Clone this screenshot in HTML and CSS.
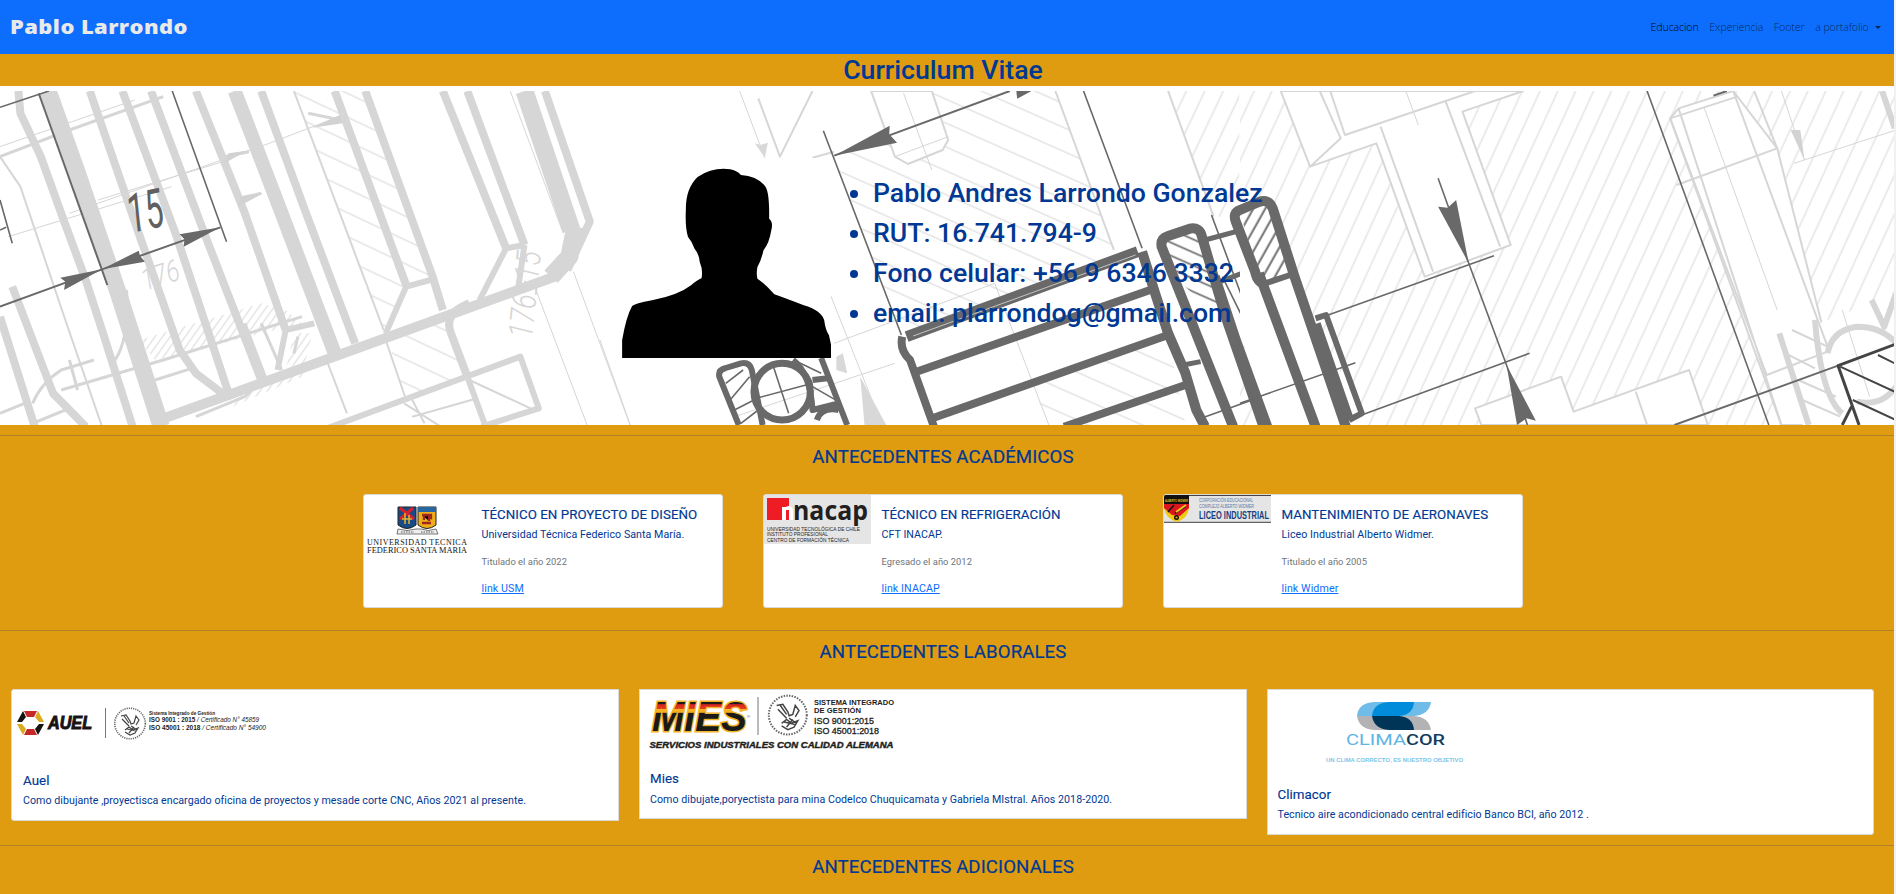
FILE: index.html
```html
<!DOCTYPE html>
<html lang="es">
<head>
<meta charset="utf-8">
<title>Pablo Larrondo</title>
<link rel="stylesheet" href="styles.css">
</head>
<body>
<div class="page">
<nav class="navbar">
  <svg class="brand" width="200" height="30" viewBox="0 0 200 30"><text x="10" y="22" textLength="178" lengthAdjust="spacingAndGlyphs">Pablo Larrondo</text></svg>
  <div class="links">
    <a class="active">Educacion</a><a>Experiencia</a><a>Footer</a><a class="drop">a portafolio<i class="caret"></i></a>
  </div>
</nav>
<h1 class="title">Curriculum Vitae</h1>
<section class="hero">
  <svg class="plan" width="1894" height="334" viewBox="0 0 1894 334">
    <defs>
      <pattern id="steep" width="40" height="40" patternUnits="userSpaceOnUse" patternTransform="rotate(20)"><path d="M3 0V40" stroke="#e6e6e6" stroke-width="4"/></pattern>
      <pattern id="flat" width="40" height="62" patternUnits="userSpaceOnUse" patternTransform="rotate(30)"><path d="M0 3H40" stroke="#e2e2e2" stroke-width="4"/></pattern>
      <pattern id="dense" width="16" height="20" patternUnits="userSpaceOnUse" patternTransform="rotate(30)"><path d="M2 0V20" stroke="#dcdcdc" stroke-width="3"/></pattern>
      <pattern id="dark" width="26" height="20" patternUnits="userSpaceOnUse" patternTransform="rotate(24)"><path d="M4 0V20" stroke="#707070" stroke-width="5"/></pattern>
      <pattern id="darkflat" width="20" height="34" patternUnits="userSpaceOnUse" patternTransform="rotate(30)"><path d="M0 4H20" stroke="#707070" stroke-width="5"/></pattern>
    </defs>
    <!-- Left: housing section -->
    <g transform="matrix(.40816 0 0 .33333 0 -91)" class="g">
      <path d="M720 273L820 273 995 855 945 1000z" fill="url(#flat)" stroke="none"/>
      <path d="M820 273L895 273 1060 835 995 855z" fill="url(#flat)" stroke="none"/>
      <path d="M950 1020L1100 950 1145 1130 995 1200z" fill="url(#flat)" stroke="none"/>
      <path d="M340 1020L640 910 700 930 740 970 380 1080z" fill="url(#dense)" stroke="none"/>
      <path d="M720 1000L765 1000 740 1130 570 1220 600 1170 700 1110z" fill="url(#dense)" stroke="none"/>
      <path d="M0 470L170 390 400 290" class="w3"/><path d="M0 440L330 300M20 710L420 560M170 640L660 430 830 350M240 600L560 480" class="w1"/>
      <path d="M45 273L50 340 100 470 150 640 210 840 250 990 325 1280" class="w8"/>
      <path d="M118 273L190 520 290 880 395 1280" class="w16"/>
      <path d="M220 273L340 700 440 1050 480 1120 545 1180" class="w8"/>
      <path d="M300 273L430 700 560 1180M370 273L510 730 640 1140M480 273L600 640 700 990" class="w8"/>
      <path d="M575 273L690 640 820 1060" class="w14"/>
      <path d="M640 273L750 640 870 1030" class="w8"/>
      <path d="M720 273L940 990M945 1020L995 1200M800 1080L850 1240M0 470L50 560 160 960 250 1280" class="w2"/>
      <path d="M820 273L995 855M895 273L1060 830 1085 930M1085 273L1240 745M1145 273L1285 735" class="w8"/>
      <path d="M1285 273L1400 690" class="w18"/>
      <path d="M1335 273L1445 665 1390 810" class="w8"/><path d="M1410 680L1395 770 1350 830" class="w18"/>
      <path d="M1250 273L1380 700M1310 860L1440 1280M1405 815L1545 1280" class="w1"/>
      <path d="M390 1260L560 1185 1370 825" class="w9"/>
      <path d="M1060 838L995 860 945 1000M1285 735L1240 745 1175 900M1285 735L1270 860M770 970L700 990 680 1110" class="w6"/>
      <path d="M1150 910Q1085 940 1105 1000L1145 1130" class="w8"/>
      <path d="M790 1290L1275 1070 1320 1225 1180 1280M1145 1130L1190 1280" class="w6"/>
      <path d="M1150 1140L1300 1225M990 1210L1080 1280M1010 1250L1170 1195M1010 1200L1040 1270" class="w2"/>
      <path d="M0 950L85 1280M30 860L130 1180 210 1280" class="w8"/>
      <path d="M150 1170L400 1080 740 950M80 1210Q100 1150 150 1110L230 1080M600 970L650 1130M640 970L690 1110M380 1140L470 1105M310 870Q320 1030 270 1100" class="w4"/>
      <path d="M0 1240L60 1210M80 1270L160 1230M170 1080L190 1170M480 1250L600 1190 650 1130M730 1010L720 1060M755 340L835 360M550 470L610 455M585 595L640 580" class="w4"/>
      <path d="M765 383L832 345 840 370zM550 490L605 452 560 460zM583 620L645 580 590 590z" fill="#d2d2d2" stroke="none"/>
      <g class="d"><path d="M95 280L263 855" class="w2"/><path d="M422 273L555 725M0 322L120 273M0 600L30 730M0 690L15 682" class="w15"/><path d="M0 920L250 808 540 682" class="w2"/>
      <path d="M250 808L340 752 343 767 355 785zM250 808L148 833 160 845 157 870zM540 682L440 703 452 718 450 740z" class="f"/></g>
    </g>
    <text transform="translate(131 142) rotate(-12) scale(.62 1)" class="dim" fill="#606060">15</text>
    <text transform="translate(532 248) rotate(-84) scale(.8 1)" class="dimlight">176±15</text>
    <text transform="translate(145 200) rotate(-18) scale(.8 1)" class="dimlight small">176</text>
    <!-- Right: bores and dimensions -->
    <g transform="matrix(.4197 0 0 .33333 1240 -11)" class="g">
      <path d="M0 33H1563V1035H0z" fill="url(#steep)" stroke="none"/>
      <path d="M97 33L167 260 325 190 440 590 645 495 530 95 675 33zM1025 115L1045 85 1175 33 1280 205 1400 800 1425 1035 1290 1035zM560 985L765 890 795 995 1070 870 1115 1035H575z" fill="#fff"/><path d="M1320 760L1563 640V1035H1340z" fill="#fff" stroke="none"/>
      <path d="M190 33L240 175 167 260M215 33L250 165 560 33M335 140L460 575M490 65L620 500M943 935L970 1035M1040 315L1280 205 1225 33M1185 50L1025 115 1255 885 1400 815M1175 33L1400 800M1045 85L1290 1035" class="w2"/>
      <path d="M395 33L425 135M1105 80L1280 690M1290 33L1345 240M1320 250L1563 150M1435 690L1500 950" class="w1"/>
      <path d="M1345 240L1312 150 1335 150z" fill="#d2d2d2" stroke="none"/>
      <path d="M1530 33L1560 145M1285 760L1355 1035M1370 720Q1385 950 1435 1000M1400 820Q1410 750 1470 740 1530 740 1563 790M1505 660L1535 740 1563 640M1470 965Q1530 980 1563 920" class="w6"/>
      <path d="M1315 750L1400 800M1300 820L1370 865M1330 900L1420 950M1340 960L1430 1010" class="w2"/>
    </g>
    <!-- Centre: shaft and bearings -->
    <g transform="matrix(.43367 0 0 .33333 600 -51)" class="g">
      <path d="M540 347L800 240 765 153H1050L1190 640 695 880z" fill="url(#flat)"  stroke="none"/>
      <path d="M1000 1040L1310 890 1350 1155H1030z" fill="url(#flat)" stroke="none"/>
      <path d="M1310 153L1415 530H1474V153z" fill="url(#steep)" stroke="none"/>
      <path d="M625 153L680 350 710 372 790 330 803 300 765 153z" fill="#fff"/>
      <path d="M365 175L415 350 490 153M1050 153L1185 630M1310 153L1415 530M490 353L540 335" class="w2"/>
      <path d="M322 153L380 353M700 160L765 390M680 350L803 290M0 900L70 1155M530 760L650 1155M540 910L910 730 1035 1155M310 1130L680 970" class="w1"/>
      <path d="M357 310L370 315 387 308 380 353zM600 1010L610 1155H660zM545 950L560 940 570 1000 545 990z" fill="#d8d8d8" stroke="none"/>
      <g class="d">
        <path d="M515 272L695 885M1115 153L1250 625M1410 525L1483 780" class="w15"/><path d="M540 347L945 153" class="w2"/>
        <path d="M540 347L668 257 667 283 685 308zM995 153L962 176 960 153z" class="f"/>
        <path d="M1295 600L1370 565 1395 590 1435 815 1400 800 1345 735z" fill="url(#darkflat)" stroke="none"/>
        <path d="M707 890L1240 635" class="w11"/><path d="M722 888L1235 645" stroke="#c4c4c4" class="w1"/>
        <path d="M720 1000L1280 745M755 1140L1310 885M1070 1160L1350 1035M697 890Q690 930 715 960L770 1160" class="w8"/>
        <path d="M1250 635L1280 760 1310 880 1350 1000 1375 1110 1395 1160M1460 1160L1295 620Q1292 595 1310 588L1360 566Q1383 560 1388 590L1440 820 1530 1160" class="w9"/>
        <path d="M1395 600L1475 572M1430 725L1500 690M1345 975L1385 965" class="w5"/>
        <path d="M1435 710L1500 880M1375 1140L1568 1050" class="w15"/>
        <path d="M320 1155L275 1010Q272 990 290 984L325 970Q345 965 350 990L375 1155" class="w6"/>
        <ellipse cx="420" cy="1055" rx="65" ry="85" class="w7"/>
        <path d="M445 960Q485 1000 490 1110L550 1090M510 954L570 1155M490 1020L525 1015M500 1140Q510 1100 550 1110" class="w6"/>
        <path d="M400 980L435 1120M360 1075L490 1030M290 1030L330 990M300 1080L345 1010M310 1110L355 1080M325 1150L365 1110M455 965L510 1000M490 1040L550 1085" class="w15"/>
      </g>
    </g>
    <g transform="matrix(.4197 0 0 .33333 1240 -11)" class="g d">
      <path d="M0 395L65 365 120 590 175 715 290 1000V1035H75L0 760z" fill="#fff" stroke="none"/>
      <path d="M0 395L65 370 120 580 60 610 40 575z" fill="url(#dark)" stroke="none"/>
      <path d="M60 610Q42 610 36 575L-10 425Q-18 398 0 390L45 366Q68 355 78 385L130 590 252 1040M45 580L180 1040M-60 590L-10 780 65 1040" class="w9"/>
      <path d="M60 610L120 585M180 715L205 705 290 1000 260 1020M185 730L265 1020" class="w6"/>
      <path d="M970 33L1260 1035M210 705L605 527M0 970L275 848M290 1005L690 820M472 295L545 550 635 855 685 1035" class="w15"/>
      <path d="M545 550L472 380 495 383 515 360zM635 855L660 1035 683 1015 705 1022z" class="f"/>
      <path d="M1035 1035L1425 857M1128 47L1160 33" class="w2"/>
      <g stroke="#444"><path d="M1563 792L1425 857 1475 1035M1435 1035L1457 980" class="w4"/><path d="M1430 860L1563 937M1520 825L1563 852M1460 960L1563 1020" class="w2"/></g>
    </g>
  </svg>
  <div class="profile">
    <svg class="avatar" width="209" height="200" viewBox="0 0 209 200"><g transform="matrix(.43367 0 0 .33333 -22 -117.7)"><path d="M51 954V900Q60 830 74 797Q80 790 120 780Q180 765 210 735Q225 718 234 714Q238 690 230 665Q228 640 218 625Q213 605 203 590Q196 560 198 510Q197 445 225 410Q260 380 300 387Q315 390 325 404Q365 408 382 440Q391 460 390 535Q400 545 395 570Q390 610 377 630Q372 660 363 680Q360 700 363 715Q380 730 402 762Q430 775 470 795Q510 810 517 840Q520 870 528 885L533 915V954z"/></g></svg>
    <ul class="data"><li>Pablo Andres Larrondo Gonzalez</li><li>RUT: 16.741.794-9</li><li>Fono celular: +56 9 6346 3332</li><li>email: plarrondog@gmail.com</li></ul>
  </div>
</section>
<hr class="r1">
<h3>ANTECEDENTES ACADÉMICOS</h3>
<div class="academic">
  <article class="card">
    <svg class="logo" width="107" height="62" viewBox="0 0 107 62">
      <g transform="translate(33 11)"><path d="M1 1H19V19Q10 26 1 19z" fill="#174a86" stroke="#222"/><path d="M3 2L17 13M16 2L3 13" stroke="#d5222a" stroke-width="3"/><path d="M5 13H15M8 7V18M12 9V18" stroke="#e7b52c" stroke-width="1.5"/><path d="M21 1H39V19Q30 26 21 19z" fill="#efae18" stroke="#222"/><path d="M21 1H39V6H21z" fill="#2866a0"/><path d="M25 9H34V12L32 11V15M25 17H34M27 10V14" stroke="#9d281e" stroke-width="2.3"/><path d="M1 23Q10 26 19 23H24Q31 26 39 23L41 28H0z" fill="#eee" stroke="#555" stroke-width=".8"/><path d="M4 26H17M24 26H37" stroke="#555" stroke-dasharray="1.5 1"/></g>
      <g font-family="Liberation Serif,serif" font-size="8" fill="#111"><text x="3" y="50" textLength="100">UNIVERSIDAD TECNICA</text><text x="3" y="58" textLength="100" lengthAdjust="spacingAndGlyphs">FEDERICO SANTA MARIA</text></g>
    </svg>
    <div class="body"><h5>TÉCNICO EN PROYECTO DE DISEÑO</h5><p>Universidad Técnica Federico Santa María.</p><p class="muted">Titulado el año 2022</p><a class="link">link USM</a></div>
  </article>
  <article class="card">
    <svg class="logo" width="107" height="49" viewBox="0 0 107 49"><rect width="108" height="49" fill="#e5e5e5"/><path d="M3 3H25V25H3z" fill="#ee1c25"/><path d="M18 25V12H22Q26 9 29 14V25H25V15H22V25z" fill="#fff"/><text x="29" y="25" textLength="75" lengthAdjust="spacingAndGlyphs" font-family="Open Sans,sans-serif" font-size="27" font-weight="700" fill="#231f20">nacap</text><g font-family="Liberation Sans,sans-serif" font-size="5.2" fill="#222"><text x="3" y="36" textLength="93" lengthAdjust="spacingAndGlyphs">UNIVERSIDAD TECNOLÓGICA DE CHILE</text><text x="3" y="41" textLength="61" lengthAdjust="spacingAndGlyphs">INSTITUTO PROFESIONAL</text><text x="3" y="46.5" textLength="82" lengthAdjust="spacingAndGlyphs">CENTRO DE FORMACIÓN TÉCNICA</text></g></svg>
    <div class="body"><h5>TÉCNICO EN REFRIGERACIÓN</h5><p>CFT INACAP.</p><p class="muted">Egresado el año 2012</p><a class="link">link INACAP</a></div>
  </article>
  <article class="card">
    <svg class="logo" width="107" height="28" viewBox="0 0 107 28"><path d="M0 0H107V28H0z" fill="#e5e5e5"/><path d="M0 .5H107M0 27.3H107" stroke="#444"/><path d="M0 0H25V13Q24 23 13 27Q2 24 0 13z" fill="#f0c713"/><path d="M0 8H25V13L16 21 8 20 0 13z" fill="#da171f"/><path d="M0 0H25V9H0z" fill="#111"/><text x="1" y="6.5" font-size="4" textLength="23" lengthAdjust="spacingAndGlyphs" font-family="Liberation Sans,sans-serif" font-weight="700" fill="#e6c11a">ALBERTO WIDMER</text><path d="M4 17L10 10M11 18L22 11" stroke="#111" stroke-width="1.5"/><path d="M12 17L22 10" stroke="#f1c61b" stroke-width="2"/><circle cx="12.5" cy="22.5" r="1.8" fill="#e5ad18" stroke="#111" stroke-width="1.4"/><g font-family="Liberation Sans,sans-serif" fill="#5876a4"><text x="35" y="6.5" font-size="5.5" textLength="54" lengthAdjust="spacingAndGlyphs">CORPORACIÓN EDUCACIONAL</text><text x="35" y="13" font-size="5.5" textLength="55" lengthAdjust="spacingAndGlyphs">COMPLEJO ALBERTO WIDMER</text><text x="35" y="24" font-size="11.5" font-weight="700" fill="#173f7d" textLength="70" lengthAdjust="spacingAndGlyphs">LICEO INDUSTRIAL</text></g></svg>
    <div class="body"><h5>MANTENIMIENTO DE AERONAVES</h5><p>Liceo Industrial Alberto Widmer.</p><p class="muted">Titulado el año 2005</p><a class="link">link Widmer</a></div>
  </article>
</div>
<hr class="r2">
<h3>ANTECEDENTES LABORALES</h3>
<div class="jobs">
  <article class="job auel">
    <svg width="270" height="72" viewBox="0 0 270 72"><g><path d="M12 21H25L22 27H15z" fill="#c62828"/><path d="M12 45H25L22 39H15z" fill="#c62828"/><path d="M11 21L5 32 10 32 14 27zM26 45L32 34 27 34 23 39z" fill="#171313"/><path d="M26 21L32 32 27 32 23 27zM11 45L5 34 10 34 14 39z" fill="#dcac20"/></g><text x="36" y="39" font-family="Liberation Sans,sans-serif" font-size="18" font-weight="700" font-style="italic" fill="#171313" stroke="#171313" textLength="44" lengthAdjust="spacingAndGlyphs">AUEL</text><path d="M93.500 18V48" stroke="#777"/>
    <g id="seal" fill="none" stroke="#666"><circle cx="118" cy="33.500" r="15.300" stroke-width="1.600" stroke-dasharray="1.2 1"/><path d="M109 26L114 25 118 31 119 34 122 33 124 26 127 30 124 35M110 29L117 36M112 26L117 33M113 40L117 37 121 40 126 38 123 43 118 45 113 42M115 39L124 41M117 43L122 37M119 36L125 40" stroke="#444" stroke-width="1.200"/></g>
    <g font-family="Liberation Sans,sans-serif" fill="#222"><text x="137" y="24.500" font-size="5" font-weight="700" textLength="66" lengthAdjust="spacingAndGlyphs">Sistema Integrado de Gestión</text><text x="137" y="32" font-size="6.500" textLength="110" lengthAdjust="spacingAndGlyphs"><tspan font-weight="700">ISO 9001 : 2015</tspan><tspan font-style="italic"> / Certificado N° 45859</tspan></text><text x="137" y="40" font-size="6.500" textLength="117" lengthAdjust="spacingAndGlyphs"><tspan font-weight="700">ISO 45001 : 2018</tspan><tspan font-style="italic"> / Certificado N° 54900</tspan></text></g></svg>
    <h5>Auel</h5><p>Como dibujante ,proyectisca encargado oficina de proyectos y mesade corte CNC, Años 2021 al presente.</p>
  </article>
  <article class="job mies">
    <svg width="270" height="70" viewBox="0 0 270 70"><defs><linearGradient id="flag" gradientUnits="userSpaceOnUse" x1="0" y1="11" x2="0" y2="41"><stop offset=".1" stop-color="#1b1a18"/><stop offset=".12" stop-color="#d8261e"/><stop offset=".26" stop-color="#e43b1f"/><stop offset=".28" stop-color="#fbb823"/><stop offset=".38" stop-color="#f5a81c"/><stop offset=".4" stop-color="#1b1a18"/></linearGradient></defs><g font-family="Liberation Sans,sans-serif" fill="#1c1c1c"><text x="12" y="41" font-size="42" font-weight="700" font-style="italic" fill="url(#flag)" stroke="#f3b32a" stroke-width="3" paint-order="stroke" textLength="95" lengthAdjust="spacingAndGlyphs">MIES</text><text x="107" y="28" font-size="4">®</text><path d="M118 7V45" stroke="#777"/><use href="#seal" transform="translate(1.500 -17.500) scale(1.240 1.270)"/><g font-weight="700"><text x="174" y="14.500" font-size="7.800" textLength="80" lengthAdjust="spacingAndGlyphs">SISTEMA INTEGRADO</text><text x="174" y="23" font-size="7.800" textLength="47" lengthAdjust="spacingAndGlyphs">DE GESTIÓN</text></g><text x="174" y="33.500" font-size="8.500" stroke="#222" stroke-width=".3" textLength="60" lengthAdjust="spacingAndGlyphs">ISO 9001:2015</text><text x="174" y="44" font-size="8.500" stroke="#222" stroke-width=".3" textLength="65" lengthAdjust="spacingAndGlyphs">ISO 45001:2018</text><text x="9.500" y="57.500" font-size="8.500" font-weight="700" font-style="italic" stroke="#222" stroke-width=".4" textLength="244" lengthAdjust="spacingAndGlyphs">SERVICIOS INDUSTRIALES CON CALIDAD ALEMANA</text></g></svg>
    <h5>Mies</h5><p>Como dibujate,poryectista para mina Codelco Chuquicamata y Gabriela MIstral. Años 2018-2020.</p>
  </article>
  <article class="job clima">
    <svg width="270" height="86" viewBox="0 0 270 86"><g transform="translate(89 12)"><path d="M17 0H74Q72 13 57 14H0Q1 1 17 0z" fill="#70bce9"/><path d="M0 14H57Q72 15 74 28H17Q2 27 0 14z" fill="#b3b3b5"/><path d="M32 0H57Q56 13 42 14H15Q16 1 32 0z" fill="#008cdb"/><path d="M15 14H42Q56 15 57 28H32Q17 27 15 14z" fill="#003558"/></g><g font-family="Roboto,sans-serif" font-size="14"><text x="78" y="54.5" fill="#5eb5e3" textLength="60" lengthAdjust="spacingAndGlyphs">CLIMA</text><text x="138" y="54.5" font-weight="500" fill="#123d60" textLength="39" lengthAdjust="spacingAndGlyphs">COR</text></g><text x="58" y="72" font-family="Liberation Sans,sans-serif" font-size="5.500" font-weight="700" fill="#80c5e8" textLength="137" lengthAdjust="spacingAndGlyphs">UN CLIMA CORRECTO, ES NUESTRO OBJETIVO</text></svg>
    <h5>Climacor</h5><p>Tecnico aire acondicionado central edificio Banco BCI, año 2012 .</p>
  </article>
</div>
<hr class="r3">
<h3>ANTECEDENTES ADICIONALES</h3>
</div>
</body>
</html>
```

FILE: styles.css
```css
* { box-sizing: border-box; margin: 0; padding: 0; }
html { background: #f1f1f1; overflow: hidden; }
body { height: 894px; overflow: hidden; font-family: Roboto, "Liberation Sans", sans-serif; font-size: 10.667px; line-height: 1.5; letter-spacing: .04px; color: #003893; }
.page { width: 1894px; height: 894px; background: #df9c11; overflow: hidden; }
.navbar { height: 54px; background: #0d6efd; display: flex; align-items: center; justify-content: space-between; padding-right: 8px; }
.brand text { font: 800 20px "Open Sans", sans-serif; fill: #e9e9e9; letter-spacing: .4px; }
.links { display: flex; font-family: "Open Sans", sans-serif; font-weight: 300; letter-spacing: -.12px; padding-bottom: 1px; }
.links a { padding: 0 5.333px; color: rgba(0,0,0,.68); }
.links .active { color: #000; }
.caret { display: inline-block; margin-left: 6px; border: 3px solid transparent; border-top-color: currentColor; border-bottom: 0; vertical-align: 2px; }
.title { height: 32px; line-height: 32px; font-size: 26.667px; font-weight: 500; letter-spacing: 0; text-align: center; padding-right: 8px; }
.hero { height: 339px; padding-top: 5px; background: #fff; display: grid; }
.plan, .profile { grid-area: 1 / 1; }
.plan { display: block; overflow: hidden; }
.profile { display: flex; padding: 67px 0 0 622px; z-index: 1; }
.avatar { background: #fff; }
.data { margin-top: 15px; padding-left: 42px; font-size: 26.667px; line-height: 40px; font-weight: 500; letter-spacing: -.02px; }
hr { border: 0; height: 1px; background: #b08125; }
.r1 { margin-top: 10px; }
h3 { height: 23px; line-height: 23px; margin-top: 10px; font-size: 18.667px; font-weight: 400; letter-spacing: .07px; text-align: center; padding-right: 8px; -webkit-text-stroke: .2px currentColor; }
.academic { display: flex; gap: 40px; margin: 25px 0 0 363px; }
.card, .job { background: #fff; border: 1px solid #dbdad8; }
.card { width: 360px; height: 114px; border-radius: 3px; display: flex; align-items: flex-start; overflow: hidden; }
.body { padding: 12px 0 0 10.500px; }
h5 { font-size: 13.333px; line-height: 16px; font-weight: 400; letter-spacing: .03px; margin-bottom: 4px; -webkit-text-stroke: .15px currentColor; }
.body p { height: 16px; }
.body .muted { font-size: 9.333px; line-height: 16px; margin: 11px 0 11px; color: #6c757d; }
.link { color: #0d6efd; text-decoration: underline; letter-spacing: .1px; }
.r2 { margin-top: 22px; }
.jobs { height: 146px; display: flex; align-items: flex-start; gap: 20px; margin: 25px 0 0 11px; }
.job { width: 608px; padding-left: 11px; }
.job svg { display: block; margin-left: -11px; letter-spacing: 0; }
.auel { height: 132px; border-radius: 3px 0 0 3px; }
.mies { height: 130px; padding-left: 10px; }
.mies svg { margin-left: -10px; }
.clima { width: 607px; height: 146px; padding-left: 9.500px; border-radius: 0 3px 3px 0; }
.clima svg { margin-left: -10px; }
.auel h5 { margin-top: 11px; }
.mies h5 { margin-top: 11px; margin-bottom: 5px; }
.clima h5 { margin-top: 11px; }
.r3 { margin-top: 10px; }
.g { fill: none; stroke: #d6d6d6; stroke-width: 2px; }
.g path, .g ellipse { vector-effect: non-scaling-stroke; stroke-linejoin: round; }
.d { stroke: #696969; }
.g .f { fill: #696969; stroke: none; }
.w1 { stroke-width: 1px; }
.w15 { stroke-width: 1.600px; }
.w2 { stroke-width: 2px; }
.w3 { stroke-width: 3px; }
.w4 { stroke-width: 3px; }
.w5 { stroke-width: 5px; }
.w6 { stroke-width: 6px; }
.w7 { stroke-width: 7px; }
.w8 { stroke-width: 8px; }
.w9 { stroke-width: 10px; }
.w11 { stroke-width: 11px; }
.w14 { stroke-width: 14px; }
.w16 { stroke-width: 17px; }
.w18 { stroke-width: 18px; }
.dim { font: italic 400 54px Roboto, sans-serif; }
.dimlight { font: italic 300 34px Roboto, sans-serif; fill: #d6d6d6; }
.dimlight.small { font-size: 30px; }
```
